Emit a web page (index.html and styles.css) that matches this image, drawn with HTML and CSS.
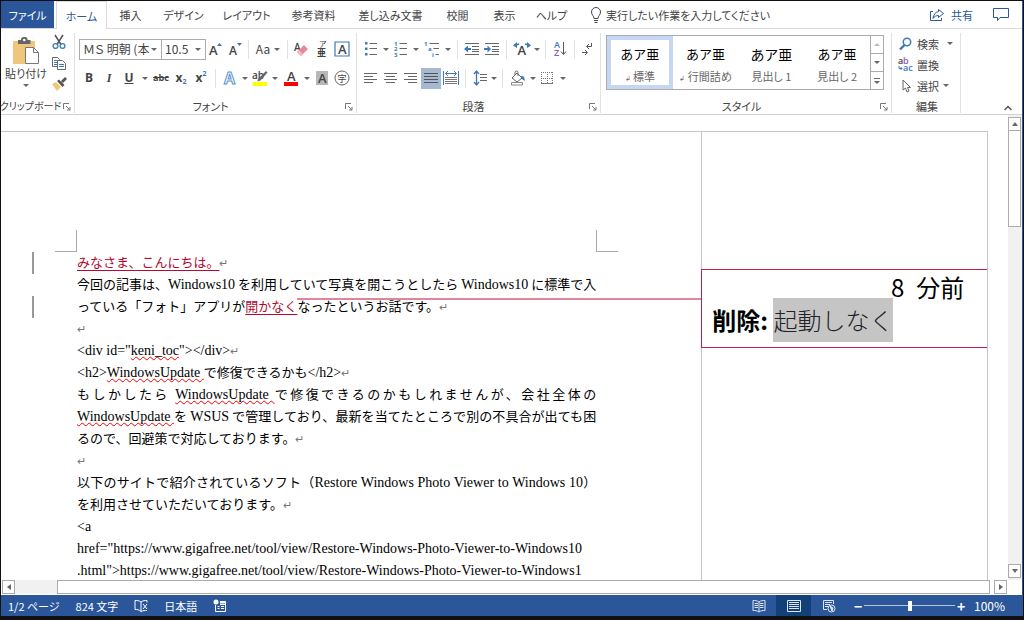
FILE: index.html
```html
<!DOCTYPE html>
<html lang="ja">
<head>
<meta charset="utf-8">
<title>文書</title>
<link rel="stylesheet" href="styles.css">
</head>
<body>
<div class="window">
  <header class="tabs">
    <nav class="tab-list">
      <button class="tab tab-file">ファイル</button>
      <button class="tab tab-active">ホーム</button>
      <button class="tab w-s">挿入</button>
      <button class="tab w-m">デザイン</button>
      <button class="tab w-l">レイアウト</button>
      <button class="tab w-l">参考資料</button>
      <button class="tab w-xl">差し込み文書</button>
      <button class="tab w-s">校閲</button>
      <button class="tab w-s">表示</button>
      <button class="tab w-s">ヘルプ</button>
    </nav>
    <button class="tell-me">
      <svg width="14" height="18" viewBox="0 0 14 18" fill="none" stroke="#444"><path d="M5 12.5C5 10 2.500 9 2.500 6a4.500 4.500 0 0 1 9 0c0 3-2.500 4-2.500 6.500zM5 14.500h4M5.500 16.500h3"/></svg>
      <span>実行したい作業を入力してください</span>
    </button>
    <button class="share">
      <svg width="16" height="16" viewBox="0 0 16 16" fill="none" stroke="#2b579a"><path d="M4 4.500H1.500v9h11V11M9.500 2.500l5 4-5 4V8.500C7 8.500 5.500 9.500 4 11.500 4.500 7.500 6.500 5 9.500 4.500z"/></svg>
      <span>共有</span>
    </button>
    <button class="comment" aria-label="コメント">
      <svg width="16" height="15" viewBox="0 0 16 15" fill="none" stroke="#2b579a"><path d="M.5 1.500h15v9H7L4.500 13.500v-3h-4z"/></svg>
    </button>
  </header>

  <section class="ribbon">
    <div class="group g-clip">
      <div class="clip">
        <button class="paste">
          <svg width="28" height="28" viewBox="0 0 28 28"><path fill="#efc67c" d="M1 4h22v23H1z"/><path fill="#666" d="M6 3h3V1.500L11 0h3l1.500 1.500V3h3v4H6z"/><circle cx="12.300" cy="3" r="1.300" fill="#fff"/><path d="M13.500 10.500h8l5 5v11h-13z" fill="#fff" stroke="#777"/><path d="M21.500 10.500v5h5" fill="none" stroke="#777"/></svg>
          <span>貼り付け</span><i class="caret"></i>
        </button>
        <div class="clip-side">
          <button aria-label="切り取り"><svg width="14" height="16" viewBox="0 0 14 16" fill="none"><path d="M3 1l6 9.500M11 1L5 10.500" stroke="#555" stroke-width="1.500"/><circle cx="3.500" cy="12" r="2.400" stroke="#3d78b8" stroke-width="1.300"/><circle cx="10.500" cy="12" r="2.400" stroke="#3d78b8" stroke-width="1.300"/></svg></button>
          <button aria-label="コピー"><svg width="14" height="14" viewBox="0 0 14 14" fill="#fff" stroke="#666"><path d="M.5 1.500h5l2 2v7h-7z"/><path d="M2 4.500h3M2 6.500h3M2 8.500h3" stroke="#3d78b8"/><path d="M5.500 4.500h5l3 3v6h-8z"/><path d="M7 8.500h5M7 10.500h5" stroke="#3d78b8"/></svg></button>
          <button aria-label="書式のコピー"><svg width="15" height="14" viewBox="0 0 15 14"><path fill="#efc67c" d="M0 7l4-2 5 5-4 4z"/><path fill="#555" d="M5 4l2-1.500 5.500 5.500L10.500 10zM9 4l4-4 2 2-4 4z"/></svg></button>
        </div>
      </div>
      <div class="label"><span>クリップボード</span><svg class="launch" width="8" height="8" viewBox="0 0 8 8"><path d="M.5 6V.5H6M3 3l4 4M7 4v3H4" fill="none" stroke="#777"/></svg></div>
    </div>

    <div class="group g-font">
      <div class="rows">
        <div class="row">
          <button class="combo combo-font">ＭＳ 明朝 (本<i class="caret"></i></button><button class="combo combo-size">10.5<i class="caret"></i></button>
          <button class="b20"><svg width="14" height="16" viewBox="0 0 14 16"><text x="0" y="14" class="t13">A</text><path d="M8 5l2.500-3L13 5z" fill="#3d78b8"/></svg></button>
          <button class="b20"><svg width="14" height="16" viewBox="0 0 14 16"><text x="0" y="14" class="t12">A</text><path d="M8 2l2.500 3L13 2z" fill="#3d78b8"/></svg></button>
          <i class="sep sep-t"></i>
          <button class="b34">Aa<i class="caret"></i></button>
          <i class="sep sep-t"></i>
          <button class="b22"><svg width="16" height="16" viewBox="0 0 16 16"><text x="1" y="10" class="t10">A</text><path fill="#e98797" d="M4 11l7-7 4 4-7 7z"/><path fill="#f4b9c2" d="M4 11l2-2 4 4-2 2z"/></svg></button>
          <button class="b20"><svg width="14" height="20" viewBox="0 0 14 20"><text x="4" y="8" class="t8">ア</text><text x="2" y="17" class="t9">亜</text></svg></button>
          <button class="b20"><svg width="16" height="16" viewBox="0 0 16 16"><path d="M1 1h14v14H1z" fill="none" stroke="#3d78b8" stroke-width="1.200"/><text x="4" y="12.500" class="t13">A</text></svg></button>
        </div>
        <div class="row">
          <button class="b20 bold">B</button>
          <button class="b20 ital">I</button>
          <button class="b20 under">U</button>
          <button class="b12" aria-label="下線の種類"><i class="caret"></i></button>
          <button class="b20 strike">abc</button>
          <button class="b20 script">x<sub>2</sub></button>
          <button class="b20 script">x<sup>2</sup></button>
          <i class="sep"></i>
          <button class="b20"><svg width="16" height="18" viewBox="0 0 16 18"><text x="2" y="14.500" class="glow">A</text></svg></button>
          <button class="b10"><i class="caret"></i></button>
          <button class="b20"><svg width="16" height="18" viewBox="0 0 16 18"><text x="0" y="10" class="t10">ab</text><path d="M6 10l8-8 1.500 1.500-7 8-3 1z" fill="#666"/><path d="M1 13h14v4H1z" fill="#ff0"/></svg></button>
          <button class="b10"><i class="caret"></i></button>
          <button class="b22"><svg width="16" height="18" viewBox="0 0 16 18"><text x="4" y="12" class="t13">A</text><path d="M1 13h14v4H1z" fill="red"/></svg></button>
          <button class="b10"><i class="caret"></i></button>
          <button class="b20"><svg width="14" height="14" viewBox="0 0 14 14"><path d="M1 0h12v14H1z" fill="#b8b8b8"/><text x="3" y="12" class="t13">A</text></svg></button>
          <button class="b20"><svg width="16" height="16" viewBox="0 0 16 16"><circle cx="8" cy="8" r="7" fill="none" stroke="#666"/><text x="3.500" y="11.500" class="t9 thin">字</text></svg></button>
        </div>
      </div>
      <div class="label"><span>フォント</span><svg class="launch" width="8" height="8" viewBox="0 0 8 8"><path d="M.5 6V.5H6M3 3l4 4M7 4v3H4" fill="none" stroke="#777"/></svg></div>
    </div>

    <div class="group g-para">
      <div class="rows">
        <div class="row">
          <button class="b20"><svg width="14" height="16" viewBox="0 0 14 16"><path d="M1 1h2.500v2.500H1zM1 6.500h2.500V9H1zM1 12h2.500v2.500H1z" fill="#3d78b8"/><path d="M5.500 2.500H13M5.500 7.500H13M5.500 13.500H13" stroke="#666"/></svg></button>
          <button class="b10"><i class="caret"></i></button>
          <button class="b20"><svg width="14" height="16" viewBox="0 0 14 16"><text x="0" y="5" class="n">1</text><text x="0" y="10" class="n">2</text><text x="0" y="15.500" class="n">3</text><path d="M5.500 2.500H13M5.500 7.500H13M5.500 13.500H13" stroke="#666"/></svg></button>
          <button class="b10"><i class="caret"></i></button>
          <button class="b22"><svg width="16" height="16" viewBox="0 0 16 16"><text x="0" y="5" class="n">1</text><text x="4" y="10" class="n">a</text><text x="8" y="15.500" class="n">i</text><path d="M5.500 2.500H15M9.500 7.500H15M11.500 13.500H15" stroke="#666"/></svg></button>
          <button class="b10"><i class="caret"></i></button>
          <i class="sep"></i>
          <button class="b20"><svg width="16" height="14" viewBox="0 0 16 14"><path d="M1 1.500h14M8 4.500h7M8 7.500h7M8 9.500h7M1 12.500h14" stroke="#666"/><path d="M0 7l4-3.500V6h3v2H4v2.500z" fill="#3d78b8"/></svg></button>
          <button class="b20"><svg width="16" height="14" viewBox="0 0 16 14"><path d="M1 1.500h14M8 4.500h7M8 7.500h7M8 9.500h7M1 12.500h14" stroke="#666"/><path d="M7 7L3.500 3.500V6H0v2h3.500v2.500z" fill="#3d78b8"/></svg></button>
          <i class="sep"></i>
          <button class="b22"><svg width="18" height="16" viewBox="0 0 18 16"><text x="4.500" y="14" class="t13">A</text><path d="M1 4.500l5-1.500M17 4.500l-5-1.500" stroke="#3d78b8" stroke-width="1.500"/><path d="M0 4.500L4 1v6zM18 4.500L14 1v6z" fill="#3d78b8"/></svg></button>
          <button class="b8"><i class="caret"></i></button>
          <i class="sep"></i>
          <button class="b20"><svg width="14" height="18" viewBox="0 0 14 18"><text x="1" y="8" class="t9 blue">A</text><text x="1" y="16" class="t9 violet">Z</text><path d="M10.500 2v12M8 11.500l2.500 3 2.500-3" stroke="#555" fill="none"/></svg></button>
          <i class="sep"></i>
          <button class="b18"><svg width="12" height="14" viewBox="0 0 12 14" fill="none" stroke="#555"><path d="M9.500 1v3.500H5M7 2L4.500 4.500 7 7M0 10.500h5M3 8l2.500 2.500L3 13"/></svg></button>
        </div>
        <div class="row">
          <button class="b20"><svg width="14" height="14" viewBox="0 0 14 14" stroke="#666"><path d="M0 2.500h13M0 5.500h9M0 8.500h13M0 11.500h9"/></svg></button>
          <button class="b20"><svg width="14" height="14" viewBox="0 0 14 14" stroke="#666"><path d="M0 2.500h13M2 5.500h9M0 8.500h13M2 11.500h9"/></svg></button>
          <button class="b20"><svg width="14" height="14" viewBox="0 0 14 14" stroke="#666"><path d="M0 2.500h13M4 5.500h9M0 8.500h13M4 11.500h9"/></svg></button>
          <button class="b20 pressed"><svg width="14" height="14" viewBox="0 0 14 14" stroke="#555"><path d="M0 2.500h14M0 5.500h14M0 8.500h14M0 11.500h14"/></svg></button>
          <button class="b20"><svg width="16" height="16" viewBox="0 0 16 16"><path d="M.5 1v14M15.500 1v14M2.500 3.500h11M5 1L2.500 3.500 5 6M11 1l2.500 2.500L11 6" stroke="#3d78b8" fill="none"/><path d="M2 7.500h12M2 9.500h12M2 11.500h12M2 13.500h12" stroke="#777"/></svg></button>
          <i class="sep"></i>
          <button class="b20"><svg width="14" height="16" viewBox="0 0 14 16"><path d="M3.500 1.500v13M1 4l2.500-3L6 4M1 12l2.500 3L6 12" stroke="#3d78b8" stroke-width="1.300" fill="none"/><path d="M7 4.500h7M7 7.500h7M7 10.500h7" stroke="#666"/></svg></button>
          <button class="b8"><i class="caret"></i></button>
          <i class="sep"></i>
          <button class="b22"><svg width="16" height="16" viewBox="0 0 16 16"><path d="M2 8l5-5 5 5-5 4zM5 5V2.500a1.500 1.500 0 0 1 3 0V6" fill="#fff" stroke="#666"/><path d="M11 6c3 0 4 2 3.500 5L12 9z" fill="#3d78b8"/><path d="M1.500 12.500h11v2.500h-11z" fill="#fff" stroke="#888"/></svg></button>
          <button class="b8"><i class="caret"></i></button>
          <button class="b20"><svg width="14" height="14" viewBox="0 0 14 14" stroke="#777" fill="none"><path stroke-dasharray="1 1" d="M1 1.500h12M1 7.500h12M1.500 1v12M7.500 1v12M12.500 1v12"/><path d="M1 12.500h12"/></svg></button>
          <button class="b12"><i class="caret"></i></button>
        </div>
      </div>
      <div class="label"><span>段落</span><svg class="launch" width="8" height="8" viewBox="0 0 8 8"><path d="M.5 6V.5H6M3 3l4 4M7 4v3H4" fill="none" stroke="#777"/></svg></div>
    </div>

    <div class="group g-style">
      <div class="gallery">
        <button class="style chosen"><b>あア亜</b><span><small>↲</small> 標準</span></button>
        <button class="style"><b>あア亜</b><span><small>↲</small> 行間詰め</span></button>
        <button class="style"><b class="big">あア亜</b><span>見出し 1</span></button>
        <button class="style"><b>あア亜</b><span>見出し 2</span></button>
        <div class="gallery-nav">
          <button aria-label="上へ"><i class="caret up dim"></i></button>
          <button aria-label="下へ"><i class="caret"></i></button>
          <button aria-label="その他" class="more"><i class="caret"></i></button>
        </div>
      </div>
      <div class="label"><span>スタイル</span><svg class="launch" width="8" height="8" viewBox="0 0 8 8"><path d="M.5 6V.5H6M3 3l4 4M7 4v3H4" fill="none" stroke="#777"/></svg></div>
    </div>

    <div class="group g-edit">
      <div class="edit-list">
        <button><svg width="14" height="14" viewBox="0 0 14 14"><circle cx="8.500" cy="5" r="3.700" fill="none" stroke="#3d78b8" stroke-width="1.500"/><path d="M6 8l-4.500 4.500" stroke="#3d78b8" stroke-width="2.400"/></svg><span>検索</span><i class="caret far"></i></button>
        <button><svg width="15" height="16" viewBox="0 0 15 16"><text x="0" y="7" class="t9">a</text><text x="5" y="7" class="t9 violet">b</text><text x="5" y="14" class="t9 blue">ac</text><path d="M1 9v2.500h3M2.500 10L4 11.500 2.500 13" stroke="#3d78b8" fill="none"/></svg><span>置換</span></button>
        <button><svg width="14" height="14" viewBox="0 0 14 14"><path d="M4.500 1v10l2.500-2 1.500 4 2-1L9 8.500h3z" fill="#fff" stroke="#666"/></svg><span>選択</span><i class="caret"></i></button>
      </div>
      <div class="label"><span>編集</span></div>
    </div>
    <button class="collapse" aria-label="リボンを折りたたむ"><svg width="8" height="6" viewBox="0 0 8 6"><path d="M.5 5L4 1.500 7.500 5" fill="none" stroke="#555" stroke-width="1.500"/></svg></button>
  </section>

  <main class="work">
    <div class="page">
      <article class="body">
        <i class="corner corner-l"></i><i class="corner corner-r"></i>
        <p class="changed"><ins>みなさま、こんにちは。</ins><s>↵</s></p>
        <p class="full">今回の記事は、<span class="en">Windows10</span> を利用していて写真を開こうとしたら <span class="en">Windows10</span> に標準で入</p>
        <p class="changed">っている「フォト」アプリが<ins>開かなく</ins><span class="anchor"></span>なったというお話です。<s>↵</s></p>
        <p><s>↵</s></p>
        <p><span class="en">&lt;div id="<u>keni_toc</u>"&gt;&lt;/div&gt;</span><s>↵</s></p>
        <p><span class="en">&lt;h2&gt;<u>WindowsUpdate </u></span>で修復できるかも<span class="en">&lt;/h2&gt;</span><s>↵</s></p>
        <p class="full">もしかしたら <span class="en"><u>WindowsUpdate </u></span> で修復できるのかもしれませんが、会社全体の</p>
        <p class="full"><span class="en"><u>WindowsUpdate </u></span>を <span class="en">WSUS</span> で管理しており、最新を当てたところで別の不具合が出ても困</p>
        <p>るので、回避策で対応しております。<s>↵</s></p>
        <p><s>↵</s></p>
        <p class="full">以下のサイトで紹介されているソフト（<span class="en">Restore Windows Photo Viewer to Windows 10</span>）</p>
        <p>を利用させていただいております。<s>↵</s></p>
        <p><span class="en">&lt;a</span></p>
        <p><span class="en">href="https://www.gigafree.net/tool/view/Restore-Windows-Photo-Viewer-to-Windows10</span></p>
        <p><span class="en">.html"&gt;https://www.gigafree.net/tool/view/Restore-Windows-Photo-Viewer-to-Windows1</span></p>
      </article>
      <aside class="markup">
        <div class="balloon">
          <time>8&ensp;分前</time>
          <div><strong>削除:</strong> <del>起動しなく</del></div>
        </div>
      </aside>
    </div>
    <div class="vscroll">
      <button aria-label="上へスクロール"><i class="arrow a-up"></i></button>
      <div class="vthumb"></div>
      <button class="end" aria-label="下へスクロール"><i class="arrow a-down"></i></button>
    </div>
  </main>

  <div class="hscroll">
    <button aria-label="左へスクロール"><i class="arrow a-left"></i></button>
    <div class="htrack"><div class="hthumb"></div></div>
    <button aria-label="右へスクロール"><i class="arrow a-right"></i></button>
  </div>

  <footer class="status">
    <span>1/2 ページ</span>
    <span>824 文字</span>
    <svg width="14" height="14" viewBox="0 0 14 14" fill="none" stroke="#fff"><path d="M7 3C5 1.500 3 1.500 1 1.500v9c2 0 4 0 6 2M7 3v9.500M7 3c2-1.500 4-1.500 6-1.500v2M9 5l4 5M13 5l-4 5M13 11.500c-2 0-4 0-6 1"/></svg>
    <span>日本語</span>
    <svg width="14" height="14" viewBox="0 0 14 14" fill="none" stroke="#fff"><path d="M2.500 6v6.500h10v-10H7M7 5.500h5.500M4.500 7.500h2M8 7.500h3M4.500 9.500h2M8 9.500h3"/><path d="M7 3.500h5.500" stroke-width="2"/><circle cx="3" cy="3" r="2.500" fill="#fff" stroke="none"/></svg>
    <div class="views">
      <button aria-label="閲覧モード"><svg width="14" height="14" viewBox="0 0 14 14" fill="none" stroke="#dfe7f2"><path d="M7 3C5 1.500 3 1.500 1 1.500v10c2 0 4 0 6 1.500 2-1.500 4-1.500 6-1.500v-10c-2 0-4 0-6 1.500zV13M2.500 4.500H6M2.500 6.500H6M2.500 8.500H6M8 4.500h3.500M8 6.500h3.500M8 8.500h3.500"/></svg></button>
      <button class="on" aria-label="印刷レイアウト"><svg width="14" height="14" viewBox="0 0 14 14" fill="none" stroke="#dfe7f2"><path d="M.5 1.500h13v11H.5zM2 3.500h10M2 5.500h10M2 7.500h10M2 9.500h10"/></svg></button>
      <button aria-label="Web レイアウト"><svg width="14" height="14" viewBox="0 0 14 14" fill="none" stroke="#dfe7f2"><path d="M5 10.500H1.500v-9h10V5M3 3.500h7M3 5.500h5M3 7.500h3"/><circle cx="9.500" cy="9.500" r="3.500"/><path d="M8 7l3 2-1 3z" fill="#dfe7f2"/></svg></button>
    </div>
    <button class="zoom-step" aria-label="縮小">−</button>
    <input class="zoom" type="range" min="0" max="100" value="50" aria-label="ズーム">
    <button class="zoom-step" aria-label="拡大">+</button>
    <span class="percent">100%</span>
  </footer>
</div>
</body>
</html>
```

FILE: styles.css
```css
* { box-sizing: border-box; }

body {
  margin: 0;
  height: 100vh;
  padding: 1px 1px 4px;
  background: #111;
  color: #444;
  font: 11px/16px "Noto Sans CJK JP", sans-serif;
  font-feature-settings: "palt";
}

button {
  padding: 0;
  border: 0;
  background: none;
  color: inherit;
  font: inherit;
  font-feature-settings: inherit;
  white-space: nowrap;
}

svg { display: block; flex: none; overflow: visible; }

.window {
  display: flex;
  flex-direction: column;
  height: 100%;
  background: #fff;
  border-right: 1px solid #2b579a;
}

/* Tab strip */
.tabs {
  display: flex;
  flex: none;
  height: 28px;
  border-bottom: 1px solid #dadada;
}
.tab-list { display: flex; height: 28px; }
.tab { height: 27px; }
.tab-file { width: 53px; background: #2b579a; color: #fff; }
.tab-active {
  width: 51px;
  height: 28px;
  margin-left: 2px;
  border: 1px solid #dadada;
  border-bottom: 0;
  background: #fff;
  color: #2b579a;
}
.w-s { width: 47px; }
.w-m { width: 59px; }
.w-l { width: 67px; }
.w-xl { width: 87px; }
.tell-me, .share { display: flex; align-items: center; }
.tell-me { margin-left: 14px; gap: 3px; }
.share { margin-left: auto; color: #2b579a; gap: 6px; }
.comment { margin: 0 13px 0 20px; }

/* Ribbon */
.ribbon {
  display: flex;
  flex: none;
  height: 86px;
  padding-top: 4px;
  border-bottom: 1px solid #d2d2d2;
}
.group {
  display: flex;
  flex-direction: column;
  flex: none;
  height: 80px;
  border-right: 1px solid #e1e1e1;
}
.g-clip { width: 74px; }
.g-font { width: 282px; padding-left: 4px; }
.g-para { width: 244px; padding-left: 4px; }
.g-style { width: 291px; padding-left: 5px; }
.g-edit { width: 69px; padding-left: 6px; }
.label {
  display: flex;
  align-items: center;
  justify-content: center;
  position: relative;
  margin-top: auto;
  height: 14px;
  padding-right: 14px;
  white-space: nowrap;
}
.g-clip .label { font-size: 10px; }
.g-edit .label { padding-right: 4px; }
.launch { position: absolute; right: 3px; bottom: 2px; }

.caret {
  display: inline-block;
  flex: none;
  border: 3px solid transparent;
  border-top-color: #666;
  border-bottom: 0;
}
.caret.up { border-top: 0; border-bottom: 3px solid #666; }
.caret.dim { border-bottom-color: #bbb; }

.clip { display: flex; }
.paste {
  display: flex;
  flex-direction: column;
  align-items: center;
  width: 50px;
  padding-top: 4px;
}
.paste .caret { margin-top: 3px; }
.clip-side { display: flex; flex-direction: column; gap: 4px; }
.clip-side button { display: flex; justify-content: center; align-items: center; width: 16px; height: 17px; }

.rows { display: flex; flex-direction: column; gap: 7px; padding-top: 5px; }
.row { display: flex; align-items: center; height: 22px; }
.row button { display: flex; align-items: center; justify-content: center; flex: none; height: 21px; }
.row .combo { justify-content: space-between; border: 1px solid #ababab; padding: 0 4px 0 3px; font-size: 12px; }
.combo-font { width: 83px; }
.row .combo-size { width: 44px; border-left: 0; }
.b8 { width: 8px; }
.b10 { width: 10px; }
.b12 { width: 12px; }
.b18 { width: 18px; }
.b20 { width: 20px; }
.b22 { width: 22px; }
.b34 { width: 34px; gap: 4px; }
.row .b34 { font-size: 12px; }
.sep { flex: none; width: 1px; height: 19px; margin: 0 4px; background: #e1e1e1; }
.sep-t { margin: 0 2px; }
.row .bold, .row .ital, .row .under, .row .script { font: 700 12px/16px "Open Sans", sans-serif; }
.row .ital { font-family: "Liberation Serif", serif; font-style: italic; }
.row .under { text-decoration: underline; }
.row .strike { font: 700 9px/16px "Open Sans", sans-serif; text-decoration: line-through; }
.script sub, .script sup { font-size: 7px; line-height: 8px; color: #3d78b8; }
.script sub { margin-top: 8px; }
.script sup { margin-bottom: 8px; }
.pressed { background: #a5b9d3; }
.t8, .t9, .t10, .t12, .t13 { fill: #444; font-family: "Open Sans", "Noto Sans CJK JP", sans-serif; font-weight: 600; }
.t8 { font-size: 8px; font-weight: 400; }
.t9 { font-size: 9px; }
.t10 { font-size: 10px; }
.t12 { font-size: 12px; }
.t13 { font-size: 13px; }
.thin { font-weight: 400; }
.blue { fill: #3d78b8; }
.violet { fill: #8e5bb5; }
.glow { fill: #fff; stroke: #5b93cc; font: 700 16px "Open Sans", sans-serif; }
.n { fill: #3d78b8; font: 700 6px "Open Sans", sans-serif; }

.gallery {
  display: flex;
  height: 55px;
  margin: 2px 7px 0 0;
  border: 1px solid #ababab;
}
.style {
  display: flex;
  flex: 1;
  flex-direction: column;
  align-items: center;
  gap: 5px;
  padding-top: 5px;
  border: 4px solid transparent;
  color: #666;
}
.chosen { border-color: #c5d7f3; }
.style b { color: #000; font-size: 13px; font-weight: 400; line-height: 18px; font-feature-settings: normal; }
.style .big { font-size: 14px; }
.style small { font-size: 7px; }
.gallery-nav { display: flex; flex-direction: column; width: 13px; border-left: 1px solid #ababab; }
.gallery-nav button { display: flex; flex: 1; align-items: center; justify-content: center; }
.gallery-nav button + button { border-top: 1px solid #ababab; }
.gallery-nav .more { flex-direction: column; gap: 2px; }
.gallery-nav .more::before { content: ""; width: 6px; height: 1px; background: #666; }

.edit-list { display: flex; flex-direction: column; }
.edit-list button { display: flex; align-items: center; gap: 4px; height: 21px; }
.edit-list svg { width: 15px; }
.edit-list .far { margin-left: 4px; }
.collapse { margin: auto 10px 3px auto; }

/* Document */
.work { display: flex; flex: 1; min-height: 0; }
.page {
  display: flex;
  flex: 1;
  margin: 16px 20px 0 0;
  border: 1px solid #c6c6c6;
  border-width: 1px 1px 0 0;
  overflow: hidden;
}
.body {
  position: relative;
  flex: 1;
  padding: 119px 105px 0 76px;
  color: #000;
  font-size: 13px;
  line-height: 22px;
  font-feature-settings: normal;
}
.body p { margin: 0; height: 22px; white-space: nowrap; }
.full { text-align: justify; text-align-last: justify; }
.en { font-family: "Liberation Serif", "Noto Sans CJK JP", serif; font-size: 14px; }
.body ins { color: #b5082e; text-decoration: underline; text-underline-offset: 3px; }
.body u { text-decoration: underline wavy red 1px; text-decoration-skip-ink: none; text-underline-offset: 1px; }
.body s { color: #777; font-size: 11px; text-decoration: none; }
.changed { position: relative; }
.changed::before { content: ""; position: absolute; left: -45px; top: 1px; width: 2px; height: 22px; background: #999; }
.anchor::after { content: ""; position: absolute; top: 3px; width: 50vw; height: 2px; background: #de879a; }
.corner { position: absolute; top: 98px; width: 22px; height: 22px; border: 1px solid #aaa; border-top: 0; }
.corner-l { left: 54px; border-left: 0; }
.corner-r { right: 83px; border-right: 0; }

.markup {
  position: relative;
  flex: none;
  width: 287px;
  padding-top: 137px;
  border-left: 1px solid #c6c6c6;
  background: #fff;
}
.balloon {
  height: 79px;
  margin-left: -1px;
  padding-left: 10px;
  border: 1px solid #c4204a;
  border-right: 0;
  color: #000;
  font-size: 24px;
  line-height: 30px;
  font-feature-settings: normal;
}
.balloon time { display: block; height: 28px; padding: 2px 24px 0 0; text-align: right; }
.balloon strong { font-weight: 700; }
.balloon del {
  display: inline-block;
  height: 44px;
  background: #c5c5c5;
  color: #222;
  font-weight: 300;
  line-height: 44px;
  text-decoration: none;
}

/* Scroll bars */
.vscroll {
  display: flex;
  flex-direction: column;
  flex: none;
  width: 14px;
  padding: 2px 0;
  background: #f1f1f1;
}
.vscroll button, .hscroll button {
  display: flex;
  align-items: center;
  justify-content: center;
  flex: none;
  width: 13px;
  height: 14px;
  border: 1px solid #ababab;
  background: #fff;
}
.vthumb { width: 13px; height: 96px; border: 1px solid #ababab; border-top: 0; background: #fff; }
.vscroll .end { margin-top: auto; }
.arrow { border: 3px solid transparent; }
.a-up { border-top: 0; border-bottom: 4px solid #666; }
.a-down { border-bottom: 0; border-top: 4px solid #666; }
.a-left { border-left: 0; border-right: 4px solid #666; }
.a-right { border-right: 0; border-left: 4px solid #666; }
.hscroll { display: flex; flex: none; gap: 4px; height: 15px; padding: 0 15px 1px 1px; }
.htrack { flex: 1; margin-left: -4px; padding-left: 42px; background: #f1f1f1; }
.hthumb { height: 14px; border: 1px solid #ababab; background: #fff; }

/* Status bar */
.status {
  display: flex;
  flex: none;
  align-items: center;
  height: 21px;
  gap: 16px;
  padding-left: 7px;
  background: #2b579a;
  color: #fff;
}
.status span { white-space: nowrap; }
.views { display: flex; margin-left: auto; margin-right: -8px; }
.views button { display: flex; align-items: center; justify-content: center; width: 35px; height: 21px; }
.views .on { background: #124078; }
.zoom-step { width: 8px; font-size: 14px; font-weight: 700; }
.zoom {
  appearance: none;
  width: 91px;
  height: 12px;
  margin: 0 -14px;
  background: linear-gradient(#b4c5de, #b4c5de) center / 100% 1px no-repeat;
}
.zoom::-webkit-slider-thumb { appearance: none; width: 4px; height: 10px; background: #fff; }
.status .percent { width: 48px; margin-left: -7px; font-size: 12px; }
```
